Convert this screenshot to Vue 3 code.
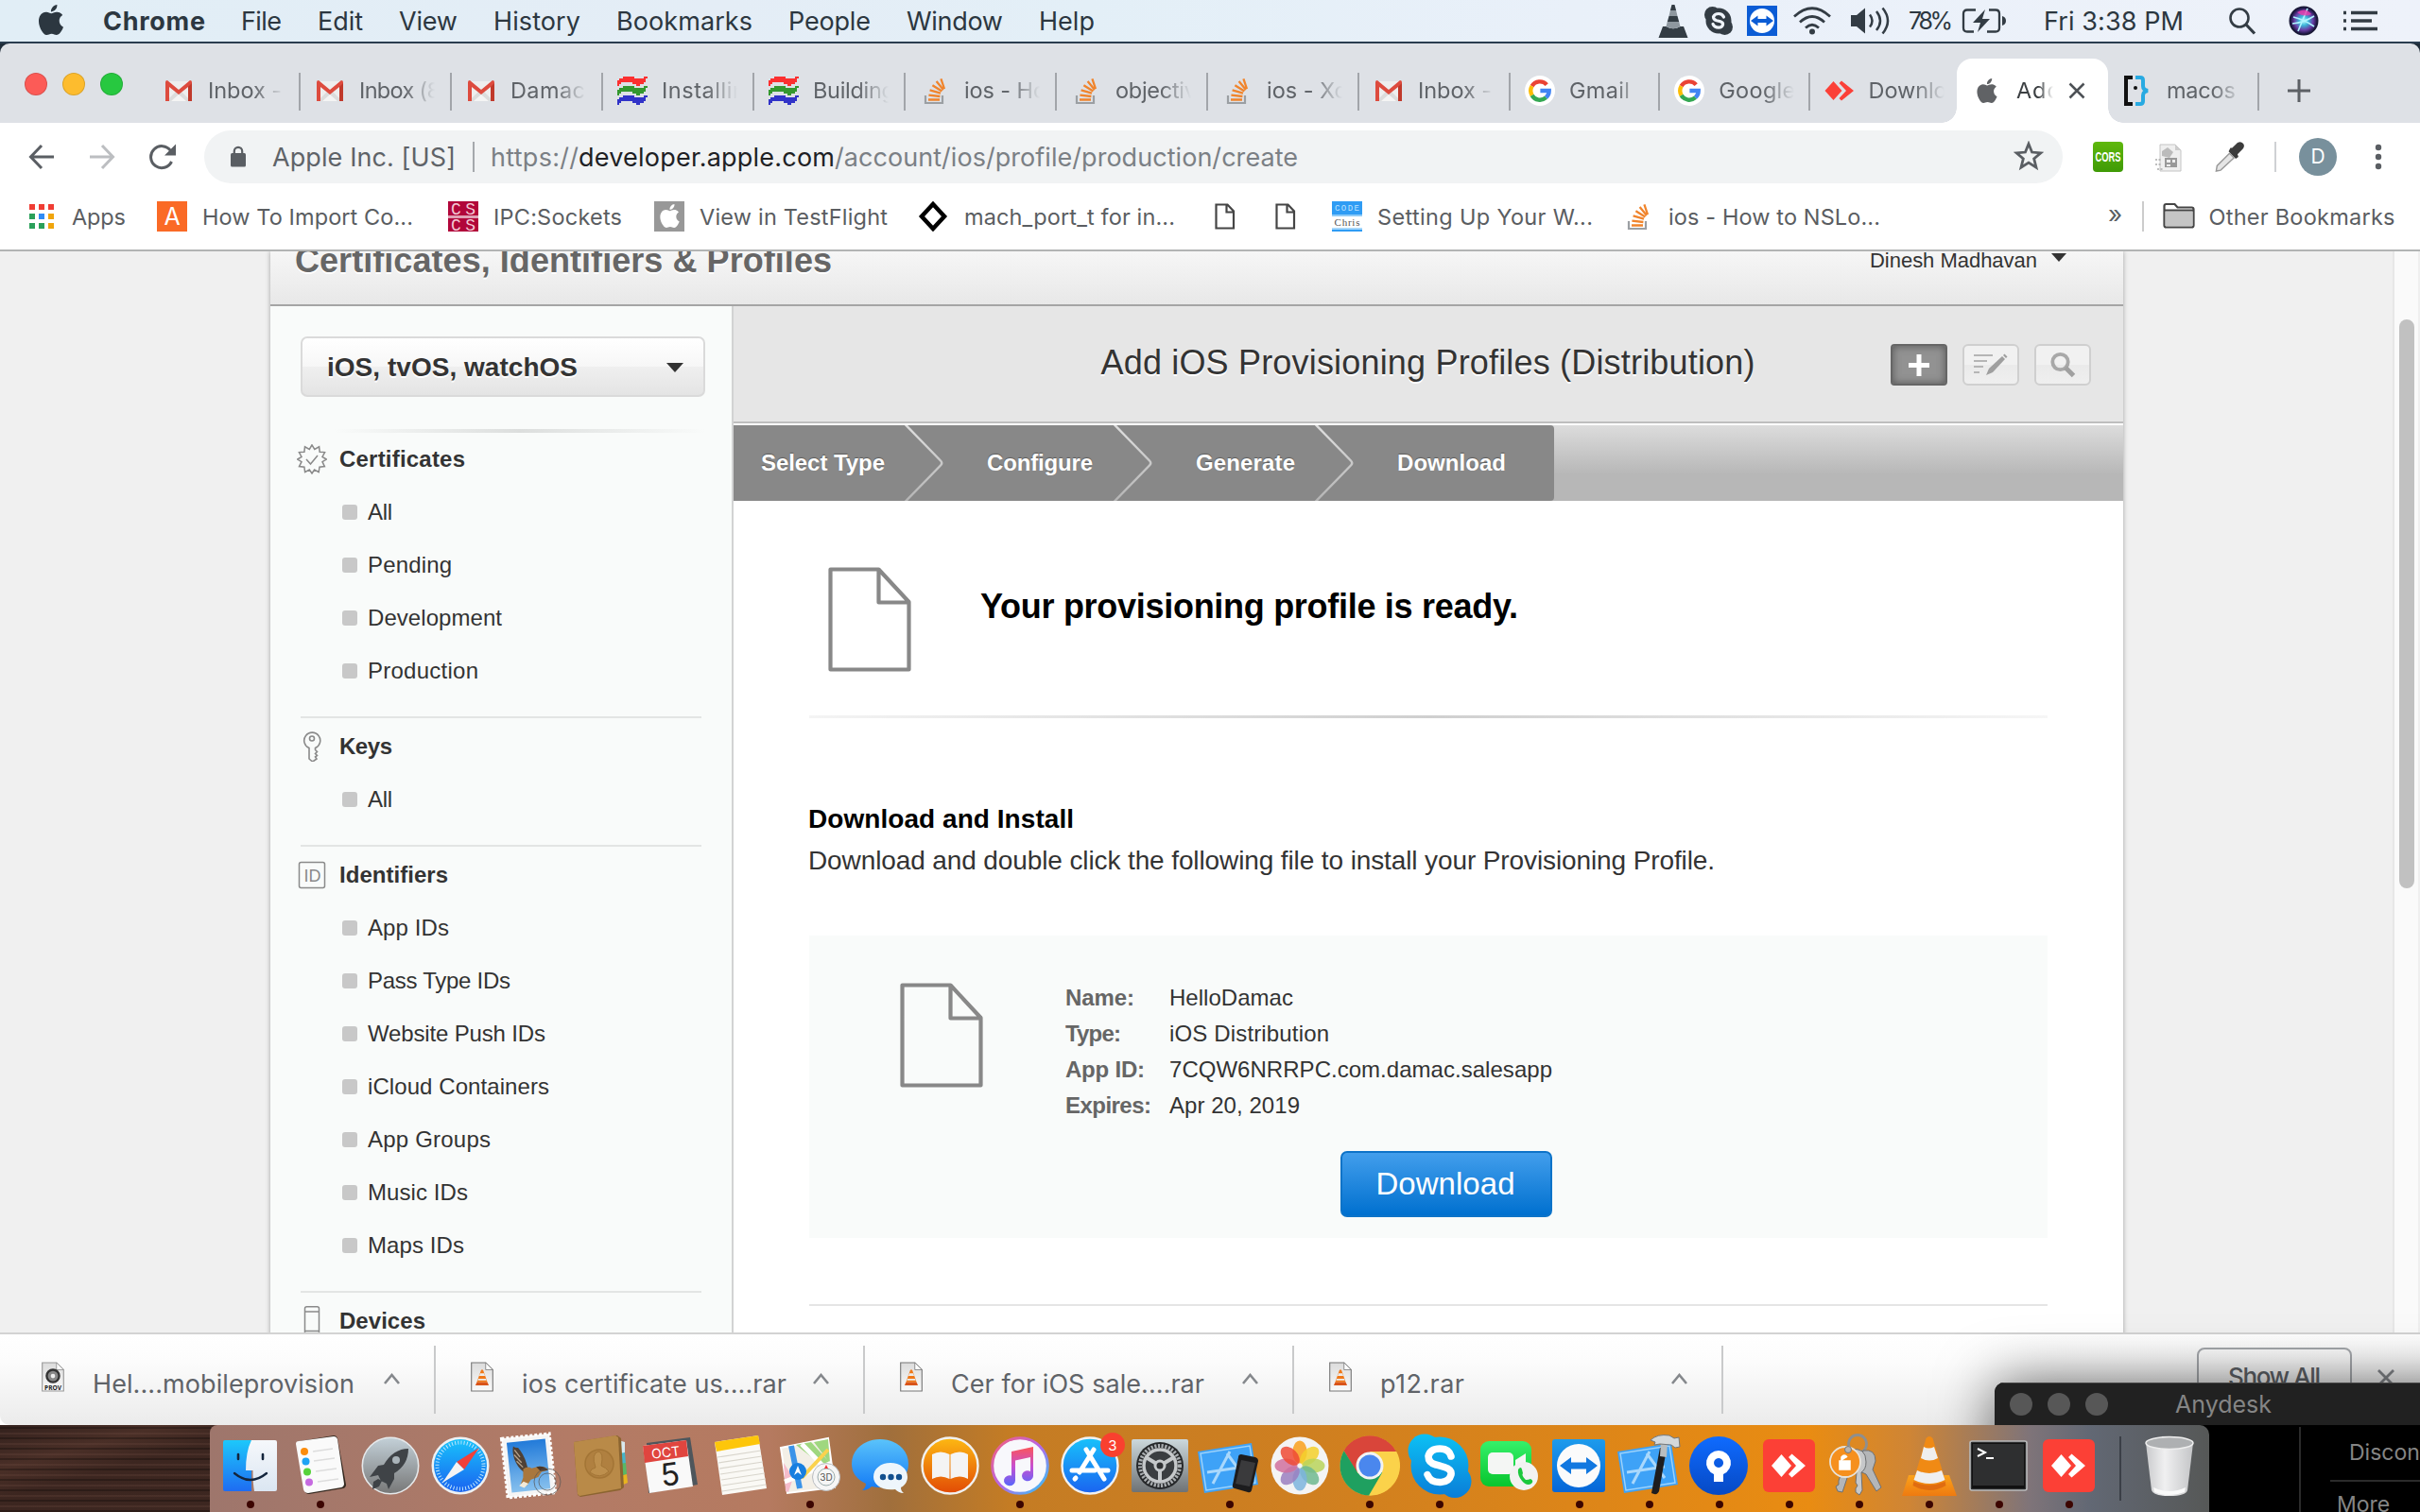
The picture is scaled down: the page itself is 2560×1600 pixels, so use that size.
<script setup>
// Spreads the letters of a label so that it fills the given width in pixels.
const vFit = {
  mounted(el, { value }) {
    const count = el.textContent.length
    if (!value || count < 2) return
    const spacing = (value - el.getBoundingClientRect().width) / (count - 1)
    el.style.letterSpacing = `${spacing}px`
    el.style.marginRight = `${-spacing}px`
  },
}

const menus = [
  ['File', 43], ['Edit', 48], ['View', 62], ['History', 92], ['Bookmarks', 144],
  ['People', 87], ['Window', 102], ['Help', 59],
]

const tabs = [
  { icon: 'gmail', title: 'Inbox -', w: 78 },
  { icon: 'gmail', title: 'Inbox (8', w: 86 },
  { icon: 'gmail', title: 'Damac', w: 79 },
  { icon: 'wave', title: 'Installin', w: 89 },
  { icon: 'wave', title: 'Building', w: 87 },
  { icon: 'so', title: 'ios - Ho', w: 87 },
  { icon: 'so', title: 'objectiv', w: 86 },
  { icon: 'so', title: 'ios - Xc', w: 85 },
  { icon: 'gmail', title: 'Inbox -', w: 78 },
  { icon: 'google', title: 'Gmail', w: 64 },
  { icon: 'google', title: 'Google', w: 81 },
  { icon: 'anydesk', title: 'Downlo', w: 83 },
]

// Small lettering that belongs to an icon, in the icon's own coordinates.
const sans = 'Inter, sans-serif'
const mono = 'Liberation Mono, monospace'
const marks = {
  'letter-a': [{ t: 'A', x: 16, y: 25, s: 25, c: '#fff', f: sans }],
  cscs: [
    { t: 'CS', x: 16, y: 14, s: 18, c: '#f3c8d4', f: mono, l: 26 },
    { t: 'CS', x: 16, y: 30.5, s: 18, c: '#f3c8d4', f: mono, l: 26 },
  ],
  codechris: [
    { t: 'CODE', x: 16, y: 10, s: 9, c: '#bfe2ff', f: mono, l: 26 },
    { t: 'Chris', x: 16, y: 26, s: 11, c: '#555', f: 'Liberation Serif, serif', l: 27 },
  ],
  idcard: [{ t: 'ID', x: 16.5, y: 22.5, s: 18, c: '#8a8a8a', f: 'Liberation Sans, sans-serif' }],
  prov: [{ t: 'PROV', x: 13, y: 31.5, s: 8, c: '#222', f: 'Noto Sans, sans-serif', l: 19, b: 700 }],
  calendar: [
    { t: 'OCT', x: 32, y: 34, s: 14, c: '#fff', f: sans, r: 'rotate(-7 32 28)' },
    { t: '5', x: 37, y: 64, s: 33, c: '#222', f: sans, r: 'rotate(-7 36 55)' },
  ],
  maps: [{ t: '3D', x: 54, y: 59, s: 10, c: '#555', f: sans }],
  appstore: [{ t: '3', x: 61, y: 26.5, s: 15, c: '#fff', f: sans }],
}

const bookmarks = [
  { icon: 'apps', title: 'Apps', w: 57, gap: 0, iw: 26, tg: 19 },
  { icon: 'letter-a', title: 'How To Import Co...', w: 223, gap: 33, iw: 32, tg: 16 },
  { icon: 'cscs', title: 'IPC:Sockets', w: 136, gap: 37, iw: 32, tg: 16 },
  { icon: 'apple-box', title: 'View in TestFlight', w: 199, gap: 34, iw: 32, tg: 16 },
  { icon: 'diamond', title: 'mach_port_t for in...', w: 223, gap: 32, iw: 32, tg: 17 },
  { icon: 'file', title: '', gap: 37, iw: 32, tg: 0 },
  { icon: 'file', title: '', gap: 32, iw: 32, tg: 0 },
  { icon: 'codechris', title: 'Setting Up Your W...', w: 228, gap: 33, iw: 32, tg: 16 },
  { icon: 'so', title: 'ios - How to NSLo...', w: 224, gap: 32, iw: 32, tg: 16 },
]

const sections = [
  { icon: 'seal', title: 'Certificates', w: 133, items: [['All', 26], ['Pending', 89], ['Development', 142], ['Production', 117]] },
  { icon: 'key', title: 'Keys', w: 56, items: [['All', 26]] },
  {
    icon: 'idcard', title: 'Identifiers', w: 115,
    items: [['App IDs', 86], ['Pass Type IDs', 151], ['Website Push IDs', 188], ['iCloud Containers', 192], ['App Groups', 130], ['Music IDs', 106], ['Maps IDs', 102]],
  },
  { icon: 'device', title: 'Devices', w: 91, items: [] },
]

const steps = [
  { title: 'Select Type', w: 131, pad: 29, box: 181 },
  { title: 'Configure', w: 112, pad: 87, box: 221 },
  { title: 'Generate', w: 105, pad: 87, box: 213 },
  { title: 'Download', w: 115, pad: 87, box: 253 },
]

const details = [
  ['Name:', 73, 'HelloDamac', 131],
  ['Type:', 59, 'iOS Distribution', 169],
  ['App ID:', 84, '7CQW6NRRPC.com.damac.salesapp', 405],
  ['Expires:', 91, 'Apr 20, 2019', 138],
]

const downloads = [
  { icon: 'prov', title: 'Hel....mobileprovision', w: 277 },
  { icon: 'rar', title: 'ios certificate us....rar', w: 280 },
  { icon: 'rar', title: 'Cer for iOS sale....rar', w: 268 },
  { icon: 'rar', title: 'p12.rar', w: 89 },
]

const dock = [
  ['finder', 1], ['reminders', 1], ['launchpad', 0], ['safari', 0], ['mail', 0], ['contacts', 0],
  ['calendar', 0], ['notes', 0], ['maps', 1], ['messages', 0], ['ibooks', 0], ['itunes', 1],
  ['appstore', 0], ['prefs', 0], ['simulator', 1], ['photos', 0], ['chrome', 1], ['skype', 1],
  ['facetime', 0], ['teamviewer', 1], ['xcode', 1], ['sourcetree', 1], ['anydesk-app', 1],
  ['keychain', 1], ['vlc', 1], ['terminal', 1], ['anydesk-app', 1],
]
const petals = ['#f9a01b', '#f3d02c', '#b9d45a', '#6fb98f', '#7db4dd', '#9a7fc0', '#d0709e', '#ef4a35']
</script>

<template>
  <div class="screen">
    <svg class="sprites" width="0" height="0">
      <defs>
        <linearGradient id="g-finder" x1="0" y1="0" x2="0" y2="1"><stop offset="0" stop-color="#1dc8fb" /><stop offset="1" stop-color="#1e6cf2" /></linearGradient>
        <linearGradient id="g-finder2" x1="0" y1="0" x2="0" y2="1"><stop offset="0" stop-color="#f6f8fb" /><stop offset="1" stop-color="#dbe6f2" /></linearGradient>
        <linearGradient id="g-launch" x1="0" y1="0" x2="0" y2="1"><stop offset="0" stop-color="#c3d0d8" /><stop offset="1" stop-color="#777" /></linearGradient>
        <linearGradient id="g-blue" x1="0" y1="0" x2="0" y2="1"><stop offset="0" stop-color="#18c2fb" /><stop offset="1" stop-color="#1a63f0" /></linearGradient>
        <linearGradient id="g-msg" x1="0" y1="0" x2="0" y2="1"><stop offset="0" stop-color="#5ac3fb" /><stop offset="1" stop-color="#1279f5" /></linearGradient>
        <linearGradient id="g-books" x1="0" y1="0" x2="0" y2="1"><stop offset="0" stop-color="#fdb913" /><stop offset="1" stop-color="#e24a05" /></linearGradient>
        <linearGradient id="g-music" x1="0.3" y1="0" x2="0.3" y2="1"><stop offset="0" stop-color="#fb5558" /><stop offset="0.5" stop-color="#c84fd0" /><stop offset="1" stop-color="#5a66fb" /></linearGradient>
        <linearGradient id="g-ring" x1="0" y1="0" x2="1" y2="1"><stop offset="0" stop-color="#f85e74" /><stop offset="0.5" stop-color="#b666e8" /><stop offset="1" stop-color="#2ccbf5" /></linearGradient>
        <linearGradient id="g-prefs" x1="0" y1="0" x2="0" y2="1"><stop offset="0" stop-color="#ccd8dc" /><stop offset="1" stop-color="#6e7275" /></linearGradient>
        <linearGradient id="g-green" x1="0" y1="0" x2="0" y2="1"><stop offset="0" stop-color="#35f06a" /><stop offset="1" stop-color="#08c52e" /></linearGradient>
        <linearGradient id="g-skype" gradientUnits="userSpaceOnUse" x1="0" y1="10" x2="0" y2="76"><stop offset="0" stop-color="#0cc0f4" /><stop offset="1" stop-color="#0a7ed8" /></linearGradient>
        <linearGradient id="g-tv" x1="0" y1="0" x2="0" y2="1"><stop offset="0" stop-color="#1d9bec" /><stop offset="1" stop-color="#0566d8" /></linearGradient>
        <linearGradient id="g-st" x1="0" y1="0" x2="0" y2="1"><stop offset="0" stop-color="#0f6bff" /><stop offset="1" stop-color="#0649c4" /></linearGradient>
        <linearGradient id="g-orange" x1="0" y1="0" x2="0" y2="1"><stop offset="0" stop-color="#fba31a" /><stop offset="1" stop-color="#ee7a10" /></linearGradient>
        <linearGradient id="g-trash" x1="0" y1="0" x2="1" y2="0"><stop offset="0" stop-color="#c9cacc" /><stop offset="0.4" stop-color="#f0f0f1" /><stop offset="1" stop-color="#c4c5c7" /></linearGradient>
        <linearGradient id="g-chev" x1="0" y1="0" x2="0" y2="1"><stop offset="0" stop-color="#dedede" /><stop offset="1" stop-color="#b4b4b4" /></linearGradient>
        <linearGradient id="g-sky" x1="0" y1="0" x2="0" y2="1"><stop offset="0" stop-color="#1d77d8" /><stop offset="1" stop-color="#8cc4ef" /></linearGradient>
        <linearGradient id="g-doc" x1="0" y1="0" x2="0" y2="1"><stop offset="0" stop-color="#dcdcdc" /><stop offset="1" stop-color="#fafafa" /></linearGradient>
        <radialGradient id="g-siri"><stop offset="0" stop-color="#bff" /><stop offset="0.35" stop-color="#3bb5d8" /><stop offset="0.7" stop-color="#6a3fa8" /><stop offset="1" stop-color="#1a1640" /></radialGradient>
      </defs>

      <symbol id="apple" viewBox="0 0 24 24"><path d="M12.152 6.896c-.948 0-2.415-1.078-3.96-1.04-2.04.027-3.91 1.183-4.961 3.014-2.117 3.675-.546 9.103 1.519 12.09 1.013 1.454 2.208 3.09 3.792 3.039 1.52-.065 2.09-.987 3.935-.987 1.831 0 2.35.987 3.96.948 1.637-.026 2.676-1.48 3.676-2.948 1.156-1.688 1.636-3.325 1.662-3.415-.039-.013-3.182-1.221-3.22-4.857-.026-3.04 2.48-4.494 2.597-4.559-1.429-2.09-3.623-2.324-4.39-2.376-2-.156-3.675 1.09-4.61 1.09zM15.53 3.83c.843-1.012 1.4-2.427 1.245-3.83-1.207.052-2.662.805-3.532 1.818-.78.896-1.454 2.338-1.273 3.714 1.338.104 2.715-.688 3.559-1.701" fill="currentColor" /></symbol>

      <symbol id="gmail" viewBox="0 0 32 32">
        <path d="M3 6h26v21H3z" fill="#eee" /><path d="M3 27l13-13 13 13z" fill="#dcdcdc" /><path d="M8 27l8-7 8 7z" fill="#f4f4f4" />
        <path d="M2 7q0-2 2-2l12 10L28 5q2 0 2 2v20h-4V12L16 20 6 12v15H2z" fill="#dd4b3e" /><path d="M26 12l4-4v19h-4z" fill="#c0392b" />
      </symbol>
      <symbol id="wave" viewBox="0 0 32 32">
        <path d="M0 5H2V3H6V1H18V3H28V1H32V3H30V7H28V9H24V11H20V9H16V7H4V9H2V11H0z" fill="#fb3030" />
        <path d="M0 15H2V13H6V11H18V13H28V11H32V13H30V17H28V19H24V21H20V19H16V17H4V19H2V21H0z" fill="#34982f" />
        <path d="M0 25H2V23H6V21H18V23H28V21H32V23H30V27H28V29H24V31H20V29H16V27H4V29H2V31H0z" fill="#3133c8" />
      </symbol>
      <symbol id="so" viewBox="0 0 32 32">
        <path d="M6 21v8h18v-8" fill="none" stroke="#9b9fa3" stroke-width="2.2" />
        <path d="M9 25.5h12M9.4 20.6l12 1.4M10.6 15.4l11.4 3.2M13.4 10.2l10 6.2M17.6 6l7.4 9M22.4 3.4L26 14" stroke="#f0842c" stroke-width="2.3" fill="none" />
      </symbol>
      <symbol id="google" viewBox="0 0 32 32">
        <circle cx="16" cy="16" r="16" fill="#fff" />
        <g fill="none" stroke-width="4.4"><path d="M23.2 9.6A9.7 9.7 0 0 0 7.6 11.2" stroke="#ea4335" /><path d="M7.6 11.2a9.7 9.7 0 0 0 0 9.6" stroke="#fbbc05" /><path d="M7.6 20.8a9.7 9.7 0 0 0 14.9 2.4" stroke="#34a853" /><path d="M22.5 23.2a9.7 9.7 0 0 0 3.2-7.2H16.4" stroke="#4285f4" /></g>
      </symbol>
      <symbol id="anydesk" viewBox="0 0 32 32"><path d="M9.500 6l9 10-9 10L.5 16z" fill="#fb4038" /><path d="M15.500 8l2.500-2.500L31 16 18 26.500 15.500 24 23 16z" fill="#fb4038" /></symbol>
      <symbol id="macosdoc" viewBox="0 0 32 32">
        <path d="M11 2H4v28h7" fill="none" stroke="#111" stroke-width="4" /><circle cx="14" cy="13" r="2" fill="#111" />
        <path d="M14 2h5q3 0 3 3v6q0 4 5 5-5 1-5 5v6q0 3-3 3h-5" fill="none" stroke="#28aae2" stroke-width="4" />
      </symbol>

      <symbol id="apps" viewBox="0 0 26 26"><path d="M0 0h6v6H0zM10 0h6v6h-6zM20 0h6v6h-6z" fill="#f03d34" /><path d="M0 10h6v6H0zM0 20h6v6H0zM10 20h6v6h-6z" fill="#2aa05a" /><path d="M10 10h6v6h-6z" fill="#2f8bf5" /><path d="M20 10h6v6h-6zM20 20h6v6h-6z" fill="#f0a50c" /></symbol>
      <symbol id="letter-a" viewBox="0 0 32 32"><path d="M0 0h32v32H0z" fill="#fa6a26" /></symbol>
      <symbol id="cscs" viewBox="0 0 32 32"><path d="M0 0h32v32H0z" fill="#b1063a" /><path d="M0 15h32v3H0z" fill="#e0a0b4" /></symbol>
      <symbol id="apple-box" viewBox="0 0 32 32"><path d="M0 0h32v32H0z" fill="#989898" /><svg x="4" y="3" width="25" height="25" viewBox="0 0 24 24" color="#fff"><use href="#apple" /></svg></symbol>
      <symbol id="diamond" viewBox="0 0 32 32"><path d="M16 3l12 13-12 13L4 16z" fill="#fff" stroke="#000" stroke-width="4.500" /></symbol>
      <symbol id="file" viewBox="0 0 32 32"><path d="M6.500 3.500h12l6.500 7v18h-18.500zM17.500 3.500v8H25" fill="#fff" stroke="#454545" stroke-width="2.200" /></symbol>
      <symbol id="codechris" viewBox="0 0 32 32"><path d="M0 0h32v16H0z" fill="#2f9cf4" /><path d="M0 14h32v2H0z" fill="#8ecbf8" /><path d="M0 16h32v14H0z" fill="#fff" /><path d="M0 28h32v2H0z" fill="#a8d8fb" /><path d="M0 30h32v2H0z" fill="#2f9cf4" /></symbol>
      <symbol id="folder" viewBox="0 0 34 28"><path d="M1.500 24.500V4q0-2 2-2h9l3 3.500h15q2 0 2 2v17q0 2-2 2h-27q-2 0-2-2z" fill="#fff" stroke="#454545" stroke-width="2.200" /><path d="M2.600 9.500h29v15.500h-29z" fill="#c5c5c5" /><path d="M1.500 8.500h31" stroke="#454545" stroke-width="2" /></symbol>

      <symbol id="seal" viewBox="0 0 32 32"><g fill="none" stroke="#8a8a8a" stroke-width="1.500"><path d="M16 .8l2.800 4.600 4.800-2.600.6 5.400 5.400.4-2.600 4.800L31.200 16l-4.200 2.700 2.400 4.900-5.400.6-.8 5.400-4.600-2.600L16 31l-2.700-4-4.700 2.600-.7-5.400-5.400-.6 2.500-4.900L.8 16 5 13.400 2.400 8.600l5.500-.4.6-5.400 4.800 2.600z" /><path d="M10 16l4.500 5L22 12" /></g></symbol>
      <symbol id="key" viewBox="0 0 32 32"><g fill="none" stroke="#8a8a8a" stroke-width="1.600"><path d="M13 17.500a8.500 8.500 0 1 1 6.500 0v2l2 2-2 2 2 2-2 1.500 1.500 2-3.500 2.500h-1.500l-3-2.500z" /><circle cx="16" cy="7.500" r="2.500" /></g></symbol>
      <symbol id="idcard" viewBox="0 0 32 32"><rect x="2.500" y="2.500" width="27" height="27" rx="2" fill="none" stroke="#8a8a8a" stroke-width="1.500" /></symbol>
      <symbol id="device" viewBox="0 0 32 32"><g fill="none" stroke="#8a8a8a" stroke-width="1.500"><rect x="8.500" y=".8" width="15" height="32" rx="2" /><path d="M8.500 6h15M8.500 26.500h15" /></g></symbol>
      <symbol id="page" viewBox="0 0 88 112"><path d="M2.500 2.500h51l32 34.500v71.500h-83zM53.500 2.500v35h32" fill="none" stroke="#888" stroke-width="4.200" stroke-linejoin="round" /></symbol>

      <symbol id="prov" viewBox="0 0 26 34"><path d="M1 1h16l8 8v24H1z" fill="url(#g-doc)" stroke="#999" stroke-width="1.200" /><path d="M17 1v8h8z" fill="#fff" stroke="#999" /><circle cx="13" cy="16" r="7" fill="#888" stroke="#333" stroke-width="2.500" /><circle cx="13" cy="16" r="2.500" fill="#eee" /></symbol>
      <symbol id="rar" viewBox="0 0 26 34"><path d="M1 1h16l8 8v24H1z" fill="url(#g-doc)" stroke="#777" stroke-width="1.200" /><path d="M17 1v8h8z" fill="#fff" stroke="#888" /><path d="M12 9h2l5 14H7z" fill="#f07818" /><path d="M10.800 13h4.400l1 3H9.800zM8.800 19h8.400l.8 2H8z" fill="#eee" /><path d="M7 23h12l1.500 3.500h-15z" fill="#d9541a" /></symbol>

      <!-- Dock artwork, each drawn in a 74 x 84 cell -->
      <symbol id="finder" viewBox="0 0 74 84"><path d="M8 18q0-2 2-2h28v54H10q-2 0-2-2z" fill="url(#g-finder)" /><path d="M38 16h25q2 0 2 2v50q0 2-2 2H41q-1.500-8-1.500-22H32q0-20 6-32z" fill="url(#g-finder2)" /><path d="M24 31v5M50 31v5" stroke="#14253c" stroke-width="2.600" stroke-linecap="round" /><path d="M20 51q17 14 34 0" fill="none" stroke="#14253c" stroke-width="2.300" stroke-linecap="round" /></symbol>
      <symbol id="reminders" viewBox="0 0 74 84"><path d="M12 20q0-3 3-3l36-6q3 0 4 3l9 49q0 3-3 4l-36 6q-4 0-5-4z" fill="#33281f" /><path d="M11 20q0-3 3-3l37-5q3 0 4 3l7 47q0 3-3 4l-35 6q-4 0-5-4z" fill="#fafafa" /><circle cx="20" cy="28" r="4" fill="#fb8c0c" /><circle cx="21.500" cy="38.500" r="4" fill="#1fa3f3" /><circle cx="23" cy="49.500" r="4" fill="#56d23a" /><circle cx="25" cy="60.500" r="4" fill="#c66ae0" /><path d="M29 28l21-3M30 38l22-3M32 49l22-3M34 60l22-3" stroke="#ddd" stroke-width="1.400" /></symbol>
      <symbol id="launchpad" viewBox="0 0 74 84"><circle cx="37" cy="43" r="29.700" fill="url(#g-launch)" stroke="#e6e9eb" stroke-width="1.600" /><path d="M56 25q-16 0-26 17l-6 1-9 12 9-2 3 6 6 3 2 6 6-11v-6q15-9 15-26z" fill="#3f4347" /><circle cx="43" cy="37" r="4" fill="#aab4ba" /><path d="M24 57l-5 3-1 8 7-3 3-6z" fill="#3f4347" /></symbol>
      <symbol id="safari" viewBox="0 0 74 84"><circle cx="37" cy="43" r="30.500" fill="#eef1f3" /><circle cx="37" cy="43" r="28" fill="url(#g-blue)" /><circle cx="37" cy="43" r="24.500" fill="none" stroke="#bfe6fb" stroke-width="4" stroke-dasharray="1 2.200" /><path d="M57 24L33 39l8 8z" fill="#f0403a" /><path d="M18 61l15-22 8 8z" fill="#f4f4f4" /></symbol>
      <symbol id="mail" viewBox="0 0 74 84">
        <g transform="rotate(-6 35 42)">
          <rect x="12" y="14" width="46" height="58" fill="url(#g-sky)" stroke="#f5f5f5" stroke-width="5" /><rect x="9.500" y="11.500" width="51" height="63" fill="none" stroke="#fff" stroke-width="3" stroke-dasharray="3 2" />
          <path d="M21 21q2 2 5 2 5 7 7 17l1 6-5 3q-6-6-8-14-2-8 0-14z" fill="#4f4034" /><path d="M22 25l5 8M21 30l7 9M23 37l6 7" stroke="#b9a48c" stroke-width="1.300" />
          <path d="M29 46q5-3 9 0l8-1q8 1 9 5l-7 1-4 5-8 2-5 6-6-3 3-6z" fill="#a9773d" /><path d="M43 45q8-1 12 5l-8 0z" fill="#4a3627" /><path d="M28 59l-5 4 5 3 5-4z" fill="#f2ead8" />
        </g>
        <g fill="none" stroke="#555" stroke-opacity=".7"><circle cx="55" cy="60" r="14" /><circle cx="55" cy="60" r="9" /></g>
      </symbol>
      <symbol id="contacts" viewBox="0 0 74 84"><path d="M56 16l7 2v12l-6 1z" fill="#d9e9ee" /><path d="M57 30l6-1 1 12-6 1z" fill="#45b5c8" /><path d="M57 41l7-1 1 12-7 2z" fill="#59b865" /><path d="M58 54l7-2 1 9-7 3z" fill="#e8b51f" /><path d="M9 18l46-7 4 3 3 52-4 3-42 7-3-2z" fill="#8b6430" /><path d="M9 18l44-7 3 2 3 54-44 8-2-2z" fill="#b98a48" /><circle cx="36" cy="41" r="15" fill="#b08040" stroke="#a37536" stroke-width="1.500" /><path d="M26 50q1-4 6-5-5-15 3-17 6 1 3 15 5 2 8 6-9 9-20 1z" fill="#bd8f4d" stroke="#a37536" /></symbol>
      <symbol id="calendar" viewBox="0 0 74 84"><path d="M12 19l46-6 8 50-52 9z" fill="#4e565c" /><path d="M8 22l46-6 7 49-46 7z" fill="#f9f9f9" /><path d="M8 22l46-6 2 17-46 7z" fill="#e0453f" /></symbol>
      <symbol id="notes" viewBox="0 0 74 84"><path d="M10 18l46-7 9 56-47 7z" fill="#faf9f5" /><path d="M10 18l46-7 2 9-46 8z" fill="#fdc60a" /><path d="M13 34l46-7M14 40l46-7M15 46l46-7M16 52l46-7M17 58l46-7M18 64l46-7M18 70l46-7" stroke="#d8d5cc" stroke-width="1.200" /></symbol>
      <symbol id="maps" viewBox="0 0 74 84"><path d="M6 24l50-10 7 52-50 6z" fill="#f3efe6" stroke="#fff" stroke-width="2" /><path d="M22 21l16-3 20 22-2-25-15 3 18 24 1 9z" fill="#9fd77f" /><path d="M9 40l10 16-5 15-3-1z" fill="#f5bccb" /><path d="M28 20l33 34M10 60l50-20" stroke="#fff" stroke-width="5" /><path d="M28 56l28-30" stroke="#fbd24d" stroke-width="4" /><path d="M17 22l9 45" stroke="#3a93e8" stroke-width="6" /><circle cx="24" cy="49" r="9" fill="#177fe0" /><path d="M24 43l4 10-4-3-4 3z" fill="#fff" /><circle cx="54" cy="55" r="14.500" fill="#f6f6f6" stroke="#b9bcc0" /><circle cx="54" cy="55" r="9" fill="none" stroke="#9aa" /><path d="M54 42l2 4h-4z" fill="#e33" /></symbol>
      <symbol id="messages" viewBox="0 0 74 84"><path d="M37 15c17 0 30 11 30 26S54 66 37 66q-5 0-9-1-4 4-10 4 4-3 4-7Q7 55 7 41c0-15 13-26 30-26z" fill="url(#g-msg)" /><path d="M48 40c10 0 18 6 18 15 0 5-3 9-7 11 0 3 1 4 3 6-4 0-7-2-9-4-14 2-23-5-23-13 0-9 8-15 18-15z" fill="#eef6fc" /><circle cx="40" cy="55" r="3.200" fill="#12508f" /><circle cx="48.500" cy="55" r="3.200" fill="#12508f" /><circle cx="57" cy="55" r="3.200" fill="#12508f" /></symbol>
      <symbol id="ibooks" viewBox="0 0 74 84"><circle cx="37" cy="43" r="29.500" fill="url(#g-books)" stroke="#f1f1f1" stroke-width="2.400" /><path d="M18 31q9-5 18.500 0v26Q27 52 18 57zM56 31q-9-5-18.500 0v26Q47 52 56 57z" fill="#f4f4f4" /></symbol>
      <symbol id="itunes" viewBox="0 0 74 84"><circle cx="37" cy="43" r="29.300" fill="#f8f8fc" stroke="url(#g-ring)" stroke-width="3" /><path d="M28 28l23-5v31a6 5.500 0 1 1-3-5V34l-16 3.500v21a6 5.500 0 1 1-4-5z" fill="url(#g-music)" /></symbol>
      <symbol id="appstore" viewBox="0 0 74 84"><circle cx="37" cy="43" r="29.500" fill="url(#g-blue)" stroke="#f1f1f1" stroke-width="2.400" /><g stroke="#fff" stroke-width="5" stroke-linecap="round"><path d="M33 26l19 31M41 26L26 50M18 48h24M49 48h7M22 56l-1 1" /></g><circle cx="61" cy="21" r="13" fill="#f9402f" /></symbol>
      <symbol id="prefs" viewBox="0 0 74 84"><rect x="7" y="15" width="60" height="56" rx="2" fill="url(#g-prefs)" /><circle cx="37" cy="43" r="25" fill="#26282a" /><circle cx="37" cy="43" r="21" fill="none" stroke="#a9adb0" stroke-width="4" stroke-dasharray="2.200 1.500" /><circle cx="37" cy="43" r="17" fill="#3a3d40" stroke="#c5c8ca" stroke-width="3.500" /><path d="M37 43V60M37 43L22 34M37 43l15-9" stroke="#c5c8ca" stroke-width="4" /><circle cx="37" cy="43" r="5" fill="#303234" stroke="#c5c8ca" stroke-width="3" /></symbol>
      <symbol id="bprint" viewBox="0 0 74 84"><path d="M3 28l57-9 7 44-57 9z" fill="#3ea2f7" /><path d="M6 30l52-8 6 39-52 8z" fill="none" stroke="#9cd2fb" stroke-width="1.500" /><g stroke="#a9d8fc" stroke-width="3" fill="none"><path d="M37 28L19 62M34 30l19 26M13 50l40-6" /></g></symbol>
      <symbol id="simulator" viewBox="0 0 74 84"><use href="#bprint" width="74" height="84" /><path d="M46 34q0-3 3-3l15 3q3 1 3 4l-7 31q-1 3-4 2l-14-4q-3-1-2-4z" fill="#1c1c1e" /><path d="M49 37l15 3-6 25-15-3z" fill="#3a3a3c" /></symbol>
      <symbol id="photos" viewBox="0 0 74 84"><circle cx="37" cy="43" r="30.500" fill="#f4f4f4" /><g><ellipse v-for="(c, i) in petals" :key="c" cx="37" cy="28.500" rx="7.600" ry="12" :fill="c" fill-opacity=".85" :transform="`rotate(${i * 45} 37 43)`" /></g></symbol>
      <symbol id="chrome" viewBox="0 0 74 84"><circle cx="37" cy="43" r="31.500" fill="#fbd24a" /><path d="M37 43L9.700 27.300A31.500 31.500 0 0 1 64.300 27.300z" fill="#d9453a" /><path d="M37 28h28.500l-1.200-.7A31.500 31.500 0 0 0 9.700 27.300L23 50z" fill="#d9453a" /><path d="M9.700 27.300A31.500 31.500 0 0 0 37 74.500L50.500 50l-26 1z" fill="#1fa060" /><path d="M36 74.500A31.500 31.500 0 0 0 65.200 28H37l13.500 22z" fill="#fbd24a" /><circle cx="37" cy="43" r="14.500" fill="#f3f3f3" /><circle cx="37" cy="43" r="11.500" fill="#4a87ee" /></symbol>
      <symbol id="skype" viewBox="0 0 74 84"><g fill="url(#g-skype)"><circle cx="37" cy="43" r="30.500" /><circle cx="21" cy="27" r="17.500" /><circle cx="53" cy="59.500" r="17.500" /></g><path d="M49 33q-2-8-12-8t-12 8q0 7 8 9l9 2.500q8 2.500 7 8-2 8-12 8t-13-8" fill="none" stroke="#fff" stroke-width="7.500" stroke-linecap="round" /></symbol>
      <symbol id="facetime" viewBox="0 0 74 84"><rect x="6" y="17" width="54" height="48" rx="9" fill="url(#g-green)" /><rect x="14" y="29" width="27" height="23" rx="5" fill="#f4f6f4" /><path d="M43 37l11-7v21l-11-6z" fill="#f4f6f4" /><circle cx="52" cy="54" r="15" fill="#f2f2f2" /><path d="M46 47q3-4 4 0l1 4q-2 2 3 7 3 0 5-1 4 2 1 5-5 3-10-3t-4-12z" fill="#1bc83c" /></symbol>
      <symbol id="teamviewer" viewBox="0 0 74 84"><rect x="8" y="15" width="56" height="56" rx="3" fill="url(#g-tv)" /><circle cx="36" cy="43" r="23" fill="#fbfbfb" /><path d="M16 43l12-9v5.500h16V34l12 9-12 9v-5.500H28V52z" fill="#1278e0" /></symbol>
      <symbol id="xcode" viewBox="0 0 74 84"><use href="#bprint" width="74" height="84" /><path d="M48 24l7 1-8 45q-2 5-8 2z" fill="#1d1d1f" /><path d="M49 17l7 1-1 16-7-1z" fill="#b9bdbf" /><path d="M38 16q7-7 20-5l5 3 5-1 1 10-5 1-4-3-12-1-6 1 1-3z" fill="#d4d8da" stroke="#72777b" /></symbol>
      <symbol id="sourcetree" viewBox="0 0 74 84"><circle cx="36" cy="43" r="31" fill="url(#g-st)" /><path d="M36 27a13 13 0 0 1 5 25v8H31v-8a13 13 0 0 1 5-25zm0 8a5 5 0 1 0 .1 0z" fill="#fff" fill-rule="evenodd" /></symbol>
      <symbol id="anydesk-app" viewBox="0 0 74 84"><rect x="9" y="15" width="55" height="56" rx="6" fill="#fc4036" /><path d="M28.500 31l10.500 12-10.500 12L18 43z" fill="#fff" /><path d="M36 34l3.500-3.500L54 43 39.500 55.500 36 52l8-9z" fill="#fff" /></symbol>
      <symbol id="keychain" viewBox="0 0 74 84"><circle cx="35" cy="20" r="9.500" fill="none" stroke="#8e8f8f" stroke-width="2.800" /><g fill="#b4b6b8" stroke="#6e7072" stroke-width="1"><path d="M20 44l7 3-8 24-5-1-2-5 3-2 0-4z" /><path d="M41 27q13-2 13 11l-3 9 9 19-5 4-11-18-9-4z" /><path d="M28 26q16-3 16 13 0 8-5 11l1 19-3 5-4-3v-4l2-3-2-3 1-11-9-3z" fill="#c6c8ca" /></g><circle cx="22" cy="39" r="16" fill="#f6901e" stroke="#e8e2d8" stroke-width="1.800" /><circle cx="25" cy="26" r="3.500" fill="#b5b5b5" stroke="#777" /><path d="M16 38h11v9H16zM18 38v-4q3-4 6 0" fill="#fff" stroke="#fff" stroke-width="1.500" /></symbol>
      <symbol id="vlc" viewBox="0 0 74 84"><path d="M15 53h43l8 22H8z" fill="url(#g-orange)" /><path d="M33.500 14q3.500-4 7 0l14 47q-17 15-35 0z" fill="#f08a14" /><path d="M31 23q5 3 11 0l4 12q-9 5-18 0zM24 48q13 6 26 0l3.500 10q-16 8-33 0z" fill="#efefef" /><path d="M20.500 60q16 7 33 0l1 4q-17 10-35 0z" fill="#e06c10" /></symbol>
      <symbol id="terminal" viewBox="0 0 74 84"><rect x="6" y="17" width="60" height="52" rx="2" fill="#2c2d2e" stroke="#b9bbbc" stroke-width="1.600" /><rect x="8" y="19" width="56" height="48" fill="#111" /><rect x="9" y="20" width="54" height="44" fill="#2e2f30" /><path d="M14 25l8 4-8 4" fill="none" stroke="#fff" stroke-width="2" /><path d="M23 35h8" stroke="#fff" stroke-width="2" /></symbol>
      <symbol id="trash" viewBox="0 0 74 84"><path d="M12 19l6 50q2 6 19 6t19-6l6-50z" fill="url(#g-trash)" /><ellipse cx="37" cy="19" rx="25" ry="6.500" fill="#aeb0b2" stroke="#eee" stroke-width="1.600" /><path d="M20 66q17 8 34 0l-1 5q-16 6-32 0z" fill="#fafafa" /></symbol>
    </svg>

    <header class="menubar">
      <svg class="mb-apple" viewBox="0 0 24 24"><use href="#apple" /></svg>
      <nav class="menus">
        <b v-fit="108" class="lbl">Chrome</b>
        <span v-for="m in menus" :key="m[0]" v-fit="m[1]" class="lbl">{{ m[0] }}</span>
      </nav>
      <div class="status">
        <svg viewBox="0 0 32 36"><path d="M14.500 1h3l1.600 6h-6.200zM11.500 13h9l1.800 6.500H9.700zM5 24h3.500q7.500 4.500 15 0H27l4.500 12H.5z" fill="#333c44" /><path d="M12.900 7h6.200l1.400 6h-9zM9.700 19.500h12.600l1.200 4.500q-7.500 4.500-15 0z" fill="#8e979f" /></svg>
        <svg viewBox="0 0 32 32"><circle cx="16" cy="16" r="13.500" fill="#333c44" /><circle cx="9.500" cy="9.500" r="8.500" fill="#333c44" /><circle cx="22.500" cy="22.500" r="8.500" fill="#333c44" /><path d="M21.500 12q-1.500-3.500-5.500-3.500t-5.500 3.200q0 3 3.500 4l4 1q3 1 2.500 3.500-1 3-4.500 3-4.500 0-6-3.800" fill="none" stroke="#eef3fa" stroke-width="3.200" stroke-linecap="round" /></svg>
        <svg viewBox="0 0 32 32"><path d="M0 0h32v32H0z" fill="#0b5cd5" /><circle cx="16" cy="16" r="13" fill="#fff" /><path d="M4 16l7.500-5.500v3.500h9v-3.500L28 16l-7.500 5.500V18h-9v3.500z" fill="#0b5cd5" /></svg>
        <svg viewBox="0 0 42 32"><g fill="none" stroke="#333c44" stroke-width="2.700"><path d="M2 11.500Q21-6 40 11.500M8 17.500q13-12 26 0M14 23.500q7-6.500 14 0" /></g><circle cx="21" cy="27.500" r="3" fill="#333c44" /></svg>
        <svg viewBox="0 0 42 32"><path d="M1 10h6l9-7.500v27L7 22H1z" fill="#333c44" /><g fill="none" stroke="#333c44" stroke-width="2.500"><path d="M21 9.500q5 6.500 0 13M28 6q8 10 0 20M34.500 2.500q11 13.500 0 27" /></g></svg>
        <span v-fit="47" class="lbl pct">78%</span>
        <svg viewBox="0 0 48 28"><g fill="none" stroke="#333c44" stroke-width="2.300"><path d="M15 2.500H6Q2 2.500 2 6.500v15q0 4 4 4h7M29 2.500h7q4 0 4 4v15q0 4-4 4h-9" /></g><path d="M43 9q4 1 4 5t-4 5zM25 2L12 16h8l-3 10 13-14h-8z" fill="#333c44" /></svg>
        <span v-fit="148" class="lbl">Fri 3:38 PM</span>
        <svg viewBox="0 0 30 30"><circle cx="12" cy="12" r="9.500" fill="none" stroke="#333c44" stroke-width="2.600" /><path d="M19 19l9 9.500" stroke="#333c44" stroke-width="3.200" /></svg>
        <svg viewBox="0 0 32 32"><circle cx="16" cy="16" r="15.500" fill="#191836" /><circle cx="16" cy="16" r="14" fill="url(#g-siri)" /><path d="M5 12q12 3 22 10M10 27q5-12 10-24M4 19q12-1 23-8" stroke="#aef4ff" stroke-width="1.700" fill="none" /><path d="M9 7q9-6 15 2-8 4-15-2z" fill="#ec3fae" fill-opacity=".8" /></svg>
        <svg viewBox="0 0 38 24"><path d="M1 3.500h3M9 3.500h28M1 12h3M9 12h22M1 20.500h3M9 20.500h28" stroke="#333c44" stroke-width="3.600" /></svg>
      </div>
    </header>

    <section class="browser">
      <div class="tabstrip">
        <div class="lights"><i class="r"></i><i class="y"></i><i class="g"></i></div>
        <div v-for="(t, i) in tabs" :key="i" class="tab" :class="{ last: i === 11, narrow: i > 8 }">
          <svg class="ic32"><use :href="'#' + t.icon" /></svg>
          <span class="ttl"><span v-fit="t.w" class="lbl">{{ t.title }}</span></span>
        </div>
        <div class="tab active">
          <svg class="ic32 grey"><use href="#apple" x="3" y="3" width="26" height="26" /></svg>
          <span class="ttl"><span v-fit="47" class="lbl">Add</span></span>
          <svg class="close" viewBox="0 0 18 18"><path d="M1.500 1.500l15 15M16.500 1.500l-15 15" stroke="#4d5156" stroke-width="2.500" /></svg>
        </div>
        <div class="tab">
          <svg class="ic32"><use href="#macosdoc" /></svg>
          <span class="ttl"><span v-fit="73" class="lbl">macos</span></span>
        </div>
        <svg class="plus" viewBox="0 0 26 26"><path d="M13 1v24M1 13h24" stroke="#5c6065" stroke-width="3" /></svg>
      </div>

      <div class="toolbar">
        <svg class="nav" viewBox="0 0 28 28"><path d="M27 14H3M14 2L2.500 14 14 26" fill="none" stroke="#5a5e63" stroke-width="3" /></svg>
        <svg class="nav" viewBox="0 0 28 28"><path d="M1 14h24M14 2l11.500 12L14 26" fill="none" stroke="#bcbec1" stroke-width="3" /></svg>
        <svg class="nav" viewBox="0 0 28 28"><path d="M23.500 19A11.500 11.500 0 1 1 22.500 7.500" fill="none" stroke="#5a5e63" stroke-width="3" /><path d="M28 .5v12H16z" fill="#5a5e63" /></svg>
        <div class="omnibox">
          <svg class="lock" viewBox="0 0 18 22"><path d="M1 9q0-1.500 1.500-1.500h13Q17 7.500 17 9v11.500q0 1.500-1.500 1.500h-13Q1 22 1 20.500z" fill="#5a5e63" /><path d="M4.800 8V5.500a4.200 4.200 0 0 1 8.400 0V8" fill="none" stroke="#5a5e63" stroke-width="2.200" /></svg>
          <span v-fit="194" class="lbl org">Apple Inc. [US]</span>
          <span class="vr"></span>
          <span v-fit="93" class="lbl u2">https://</span><span v-fit="271" class="lbl u1">developer.apple.com</span><span v-fit="490" class="lbl u2 rest">/account/ios/profile/production/create</span>
          <svg class="star" viewBox="0 0 30 30"><path d="M15 3l3.300 8.300 8.700.7-6.700 5.700 2.200 8.800L15 21.700l-7.500 4.800 2.200-8.800L3 12l8.700-.7z" fill="none" stroke="#5a5e63" stroke-width="2.600" /></svg>
        </div>
        <svg class="cors" viewBox="0 0 32 32"><text x="16" y="21" text-anchor="middle" textLength="27" lengthAdjust="spacingAndGlyphs" font-size="14" font-weight="700" fill="#fff" font-family="Liberation Sans, sans-serif">CORS</text></svg>
        <svg class="ext" viewBox="0 0 32 32"><path d="M6 3h16l6 6v22H6z" fill="#efefef" stroke="#c4c4c4" /><path d="M22 3v6h6z" fill="#ccc" /><path d="M8 10l6-4 6 5-4 6-8-2z" fill="#bbb" /><path d="M11 17h13v10H11z" fill="#999" /><path d="M13 19h4v3h-4zM19 19h3v3h-3zM13 24h4v2h-4z" fill="#eee" /><path d="M1 19h7M1 24h7M3 29h7" stroke="#aaa" stroke-width="1.500" stroke-dasharray="2 1.500" /></svg>
        <svg class="ext pipette" viewBox="0 0 34 34"><path d="M20 7l6-6q5-2 7 2 1 3-1 5l-6 6 1 3-3 2-8-8 2-4z" fill="#3c3c3c" /><path d="M17 13l5 5L7 32l-5 1 1-6z" fill="#e5e5e5" stroke="#999" stroke-width="1.500" /></svg>
        <span class="vr light"></span>
        <div class="avatar">D</div>
        <svg class="dots" viewBox="0 0 8 28"><circle cx="4" cy="4" r="3.200" fill="#5a5e63" /><circle cx="4" cy="14" r="3.200" fill="#5a5e63" /><circle cx="4" cy="24" r="3.200" fill="#5a5e63" /></svg>
      </div>

      <div class="bookmarks">
        <div v-for="(b, i) in bookmarks" :key="i" class="bm" :style="{ marginLeft: b.gap + 'px', gap: b.tg + 'px' }">
          <svg :width="b.iw" :height="b.iw"><use :href="'#' + b.icon" /><text v-for="m in marks[b.icon]" :key="m.y" :x="m.x" :y="m.y" :font-size="m.s" :fill="m.c" :font-family="m.f" :textLength="m.l" text-anchor="middle">{{ m.t }}</text></svg>
          <span v-if="b.title" v-fit="b.w" class="lbl">{{ b.title }}</span>
        </div>
        <span class="more">»</span>
        <span class="vr thin"></span>
        <svg class="folder" viewBox="0 0 34 28"><use href="#folder" /></svg>
        <span v-fit="197" class="lbl">Other Bookmarks</span>
      </div>
    </section>

    <main class="viewport">
      <div class="site">
        <div class="masthead">
          <div class="mast-row">
            <span v-fit="568" class="lbl mast-title">Certificates, Identifiers &amp; Profiles</span>
            <span v-fit="177" class="lbl user">Dinesh Madhavan</span>
            <i class="caret small"></i>
          </div>
        </div>
        <div class="cols">
          <aside class="side">
            <div class="select"><span v-fit="265" class="lbl">iOS, tvOS, watchOS</span><i class="caret"></i></div>
            <div class="fade-rule"></div>
            <div v-for="s in sections" :key="s.title" class="sec">
              <div class="sec-head">
                <svg class="ic32"><use :href="'#' + s.icon" /><text v-for="m in marks[s.icon]" :key="m.y" :x="m.x" :y="m.y" :font-size="m.s" :fill="m.c" :font-family="m.f" font-weight="400" text-anchor="middle">{{ m.t }}</text></svg>
                <span v-fit="s.w" class="lbl">{{ s.title }}</span>
              </div>
              <div v-for="it in s.items" :key="it[0]" class="sec-item"><i></i><span v-fit="it[1]" class="lbl">{{ it[0] }}</span></div>
            </div>
          </aside>
          <section class="content">
            <div class="titlebar">
              <span v-fit="692" class="lbl pagetitle">Add iOS Provisioning Profiles (Distribution)</span>
              <div class="btns">
                <span class="tb on"><svg width="28" height="28" viewBox="0 0 28 28"><path d="M3 12h8.500V3h5v9H25v5h-8.500v9h-5v-9H3z" fill="#fff" /></svg></span>
                <span class="tb"><svg width="36" height="24" viewBox="0 0 36 24"><path d="M0 2h20M0 8h14M0 14h10M0 20h6" stroke="#b5b5b5" stroke-width="2.200" /><path d="M13 23l3-7L30 3l3 3-13 14z" fill="#9f9f9f" /><path d="M31 2l1.500-1.500 3 3L34 5z" fill="#9f9f9f" /></svg></span>
                <span class="tb"><svg width="28" height="28" viewBox="0 0 28 28"><circle cx="11.500" cy="11" r="8.200" fill="none" stroke="#a8a8a8" stroke-width="3.800" /><path d="M17 17l8.500 8.500" stroke="#a0a0a0" stroke-width="5" /></svg></span>
              </div>
            </div>
            <div class="steps">
              <div v-for="(s, i) in steps" :key="s.title" class="step" :class="{ end: i === 3 }" :style="{ width: s.box + 'px', paddingLeft: s.pad + 'px' }">
                <span v-fit="s.w" class="lbl">{{ s.title }}</span>
                <svg v-if="i < 3" class="chev" viewBox="0 0 42 80"><path d="M.5-1L38 37.500q2.500 2.500 0 5L.5 81" fill="none" stroke="url(#g-chev)" stroke-width="2.400" /></svg>
              </div>
            </div>
            <div class="ready">
              <svg class="page"><use href="#page" /></svg>
              <span v-fit="569" class="lbl">Your provisioning profile is ready.</span>
            </div>
            <div class="rule soft"></div>
            <div class="install">
              <div class="l1"><span v-fit="281" class="lbl">Download and Install</span></div>
              <div class="l2"><span v-fit="959" class="lbl">Download and double click the following file to install your Provisioning Profile.</span></div>
            </div>
            <div class="panel">
              <svg class="page"><use href="#page" /></svg>
              <div class="info">
                <div v-for="d in details" :key="d[0]" class="drow">
                  <span class="k"><span v-fit="d[1]" class="lbl">{{ d[0] }}</span></span>
                  <span v-fit="d[3]" class="lbl">{{ d[2] }}</span>
                </div>
                <div class="dl"><span v-fit="147" class="lbl">Download</span></div>
              </div>
            </div>
            <div class="rule bottom"></div>
          </section>
        </div>
      </div>
      <div class="track"><div class="thumb"></div></div>
    </main>

    <div class="shelf">
      <div v-for="d in downloads" :key="d.title" class="dlitem">
        <svg class="dlicon" viewBox="0 0 26 34"><use :href="'#' + d.icon" /><text v-for="m in marks[d.icon]" :key="m.y" :x="m.x" :y="m.y" :font-size="m.s" :fill="m.c" :font-family="m.f" :font-weight="m.b" :textLength="m.l" lengthAdjust="spacingAndGlyphs" text-anchor="middle">{{ m.t }}</text></svg>
        <span class="name"><span v-fit="d.w" class="lbl">{{ d.title }}</span></span>
        <svg class="up" viewBox="0 0 18 12"><path d="M1.500 11L9 2l7.500 9" fill="none" stroke="#85888c" stroke-width="2.600" /></svg>
      </div>
      <div class="showall"><span v-fit="98" class="lbl">Show All</span></div>
      <svg class="shx" viewBox="0 0 18 18"><path d="M1 1l16 16M17 1L1 17" stroke="#85888c" stroke-width="2.800" /></svg>
    </div>
    <div class="desk"></div>

    <div class="anydesk">
      <div class="ad-bar"><i></i><i></i><i></i><span v-fit="102" class="lbl">Anydesk</span></div>
      <div class="ad-body">
        <div class="ad-menu">
          <div class="ad1">Disconnect</div>
          <div class="ad2">More</div>
        </div>
      </div>
    </div>

    <div class="dock">
      <div v-for="(d, i) in dock" :key="i" class="app">
        <svg width="74" height="80" viewBox="0 0 74 80"><use :href="'#' + d[0]" width="74" height="84" /><text v-for="m in marks[d[0]]" :key="m.y" :x="m.x" :y="m.y" :font-size="m.s" :fill="m.c" :font-family="m.f" :transform="m.r" text-anchor="middle">{{ m.t }}</text></svg>
        <i v-if="d[1]"></i>
      </div>
      <span class="dsep"></span>
      <svg width="74" height="84" viewBox="0 0 74 84"><use href="#trash" /></svg>
    </div>
  </div>
</template>

<style>
body { margin: 0; overflow: hidden; }
</style>

<style scoped>
* { box-sizing: border-box; }
.screen { position: relative; width: 2560px; height: 1600px; overflow: hidden; background: #fff; font-family: Inter, Roboto, sans-serif; display: flex; flex-direction: column; }
.sprites { position: absolute; }
.lbl { display: inline-block; white-space: pre; flex: none; }
svg { flex: none; display: block; }
.ic32 { width: 32px; height: 32px; }
.vr { width: 2px; height: 32px; background: #b3b6ba; flex: none; }

.menubar { height: 46px; flex: none; border-bottom: 2px solid #2a3d4f; background: linear-gradient(90deg, #e1eef6, #e4edf6 30%, #e3eff7 45%, #e9f0f9 65%, #eef2fa); display: flex; align-items: center; color: #2c3740; font-size: 27px; }
.mb-apple { width: 32px; height: 32px; margin-left: 38px; margin-top: -3px; }
.menus { display: flex; gap: 38px; margin-left: 39px; }
.status { margin-left: auto; width: 806px; display: grid; grid-template-columns: 48px 46px 48px 61px 62px 56px 87px 195px 64px 57px 82px; align-items: center; }
.status svg:nth-child(1) { width: 32px; height: 36px; }
.status svg:nth-child(2), .status svg:nth-child(3) { width: 32px; height: 32px; }
.status svg:nth-child(4), .status svg:nth-child(5) { width: 42px; height: 32px; }
.status svg:nth-child(7) { width: 48px; height: 28px; }
.status svg:nth-child(9) { width: 30px; height: 30px; }
.status svg:nth-child(10) { width: 32px; height: 32px; }
.status svg:nth-child(11) { width: 38px; height: 24px; }
.status .lbl { justify-self: start; }
.pct { font-size: 25px; }

.browser { height: 220px; flex: none; background: #1f2c38; }
.tabstrip { height: 84px; background: #dee1e6; border-radius: 10px 10px 0 0; display: flex; align-items: flex-end; }
.lights { width: 158px; height: 84px; flex: none; display: flex; gap: 16px; padding: 31px 0 0 26px; }
.lights i { width: 24px; height: 24px; border-radius: 50%; border: 1px solid #0002; }
.lights .r { background: #fc5b57; } .lights .y { background: #fdbc2e; } .lights .g { background: #27c840; }
.tab { width: 160px; height: 68px; flex: none; display: flex; align-items: center; padding-left: 15px; position: relative; font-size: 23.5px; color: #5f6368; }
.tab.narrow { width: 158.3px; }
.tab::after { content: ''; position: absolute; right: 0; top: 15px; width: 2px; height: 40px; background: #a2a5aa; }
.tab.last::after, .tab.active::after { display: none; }
.tab .ttl { width: 80px; margin-left: 15px; overflow: hidden; -webkit-mask-image: linear-gradient(90deg, #000 60%, transparent 100%); mask-image: linear-gradient(90deg, #000 60%, transparent 100%); display: flex; line-height: 36px; }
.tab.active { background: #fff; border-radius: 16px 16px 0 0; color: #3c4043; width: 160px; margin-left: -3px; padding-left: 16px; }
.tab.active .ttl { width: 39px; }
.tab.active::before { content: ''; position: absolute; left: -16px; right: -16px; bottom: 0; height: 16px; background: radial-gradient(circle at 0 0, transparent 15.500px, #fff 16px) 0 0 / 16px 16px no-repeat, radial-gradient(circle at 100% 0, transparent 15.500px, #fff 16px) 100% 0 / 16px 16px no-repeat; }
.grey { color: #606265; }
.close { width: 18px; height: 18px; margin-left: 16px; }
.plus { width: 26px; height: 26px; margin: 0 0 21px 29px; }

.toolbar { height: 72px; background: #fff; display: flex; align-items: center; padding-left: 30px; }
.nav { width: 28px; height: 28px; margin-right: 36px; }
.omnibox { margin-left: -6px; width: 1966px; height: 56px; border-radius: 28px; background: #f1f3f4; display: flex; align-items: center; padding-left: 27px; font-size: 27px; flex: none; color: #5f6368; }
.lock { width: 18px; height: 23px; margin-top: -2px; }
.org { margin-left: 27px; }
.omnibox .vr { margin: 0 17px 0 18px; background: #a5a8ac; }
.u1 { color: #202124; } .u2 { color: #7b8085; }
.star { width: 32px; height: 32px; margin: -2px 20px 0 auto; }
.cors { width: 32px; height: 32px; border-radius: 4px; background: linear-gradient(#5fb80c, #3f9a06); margin-left: 32px; }
.ext { width: 32px; height: 32px; margin-left: 33px; }
.pipette { margin-left: 31px; width: 33px; }
.vr.light { background: #cfd1d4; margin-left: 31px; }
.avatar { width: 40px; height: 40px; border-radius: 50%; background: #78909c; color: #fff; font-size: 21px; line-height: 40px; text-align: center; margin-left: 24px; flex: none; }
.dots { width: 8px; height: 28px; margin-left: 40px; }

.bookmarks { height: 64px; background: #fff; border-bottom: 2px solid #b2b4b4; padding: 0 0 8px 31px; display: flex; align-items: center; font-size: 23.500px; color: #5a5d61; }
.bm { display: flex; align-items: center; flex: none; }
.more { margin-left: 241px; width: 16px; font-size: 26px; margin-top: -5px; }
.vr.thin { margin-left: 20px; background: #ccc; width: 1.500px; }
.folder { width: 34px; height: 28px; margin: -2px 15px 0 20px; }

.viewport { height: 1144px; flex: none; background: #f0f0f0; overflow: hidden; display: flex; font-family: "Liberation Sans", Arial, sans-serif; color: #333; }
.site { margin-left: 286px; width: 1960px; height: 1300px; box-shadow: 0 0 5px #0005; background: #fff; flex: none; }
.masthead { height: 58px; border-bottom: 2px solid #a5a5a5; background: linear-gradient(#f6f6f6, #e8e8e8); }
.mast-row { display: flex; align-items: center; height: 40px; position: relative; top: -10px; padding-left: 26px; }
.mast-title { font-weight: 700; font-size: 36px; color: #666; text-shadow: 0 2px 0 #fff; }
.user { font-size: 22px; margin-left: 1098px; }
.caret { width: 0; border: 9px solid transparent; border-top: 10px solid #333; border-bottom: 0; }
.caret.small { border-width: 9px 8px 0; margin: -7px 0 0 15px; }
.cols { display: flex; height: 1250px; }
.side { width: 490px; background: #f9fbfa; border-right: 2px solid #d2d3d3; padding: 32px 0 0 28px; flex: none; }
.select { margin-left: 4px; width: 428px; height: 64px; border: 2px solid #dadada; border-radius: 7px; background: linear-gradient(#fff, #f7f7f7 49%, #efefef 51%, #e4e4e4); display: flex; align-items: center; justify-content: space-between; padding: 1px 21px 0 26px; font-weight: 700; font-size: 28px; text-shadow: 0 2px 0 #fff; }
.fade-rule { margin: 34px 0 0 40px; width: 392px; height: 4px; background: linear-gradient(90deg, transparent, #dcdedd 50%, transparent); }
.sec + .sec { margin-top: 20px; border-top: 2px solid #e3e5e4; padding-top: 2px; margin-left: 4px; width: 424px; }
.sec + .sec > * { margin-left: -4px; }
.sec-head { height: 56px; display: flex; align-items: center; gap: 13px; font-size: 24px; font-weight: 700; }
.sec-item { height: 56px; display: flex; align-items: center; padding-left: 48px; gap: 11px; font-size: 24px; }
.sec-item i { width: 16px; height: 16px; border-radius: 3px; background: #c8c8c8; }

.content { width: 1470px; }
.titlebar { height: 124px; background: #e6e6e6; border-bottom: 2px solid #bebebe; display: grid; grid-template-columns: 1fr auto 1fr; align-items: center; padding: 1px 34px 0; }
.pagetitle { grid-column: 2; font-size: 36px; text-shadow: 0 2px 0 #fff; margin-top: -3px; margin-left: -1px; }
.btns { display: flex; gap: 16px; justify-content: flex-end; padding-top: 1px; }
.tb { width: 60px; height: 44px; border: 2px solid #cfcfcf; border-radius: 6px; background: linear-gradient(#f1f1f1 50%, #eaeaea 51%, #efefef); display: flex; align-items: center; justify-content: center; }
.tb.on { background: #929292; border-color: #666; border-radius: 4px; box-shadow: inset 0 0 8px #555; }
.steps { margin-top: 2px; height: 80px; display: flex; background: linear-gradient(#dcdcdc, #b7b7b7 65%); }
.step { background: #888; color: #fff; height: 80px; display: flex; align-items: center; font-size: 24px; font-weight: 700; position: relative; flex: none; text-shadow: 0 -1px 1px #0005; padding-bottom: 1px; }
.step.end { border-radius: 0 4px 4px 0; }
.chev { position: absolute; z-index: 1; right: -42px; top: 0; width: 42px; height: 80px; }
.ready { height: 227px; padding: 70px 0 0 100px; display: flex; align-items: flex-start; font-size: 36px; font-weight: 700; color: #000; }
.ready .lbl { line-height: 40px; margin: 22px 0 0 73px; }
.page { width: 88px; height: 112px; }
.rule { height: 3px; width: 1310px; margin-left: 80px; background: linear-gradient(90deg, #f4f4f4, #cfcfcf 50%, #f6f6f6); }
.install { padding: 85px 0 0 79px; height: 230px; font-size: 28px; }
.l1 { font-weight: 700; color: #000; height: 44px; line-height: 44px; }
.l2 { height: 44px; line-height: 44px; }
.panel { margin-left: 80px; width: 1310px; height: 320px; background: #f9fbfa; display: flex; padding: 50px 0 0 96px; }
.info { margin: -3px 0 0 87px; font-size: 24px; }
.drow { display: flex; height: 38px; line-height: 38px; }
.drow .k { width: 110px; font-weight: 700; color: #666; display: flex; }
.dl { margin: 29px 0 0 291px; width: 224px; height: 70px; border: 2px solid #0d73c8; border-radius: 7px; background: linear-gradient(#429eec, #0070cf); color: #fff; font-size: 33px; display: flex; align-items: center; justify-content: center; }
.dl .lbl { position: relative; left: -1px; }
.rule.bottom { margin-top: 70px; background: #e5e5e5; height: 2px; }
.track { margin-left: auto; width: 29px; background: #fafafa; border-left: 2px solid #e7e7e7; border-right: 2px solid #efefef; padding: 72px 0 0 5px; }
.thumb { width: 16px; height: 602px; border-radius: 8px; background: #c1c1c1; }

.shelf { height: 98px; flex: none; border-top: 2px solid #d3d3d3; background: linear-gradient(#fff, #fcfcfc 30%, #ebebeb); display: flex; border-radius: 0 0 0 10px; font-size: 27px; color: #5f6368; }
.dlitem { width: 454px; height: 72px; margin-top: 12px; border-right: 2px solid #c9cacb; display: flex; flex: none; }
.dlitem:first-child { width: 461px; padding-left: 7px; }
.dlicon { width: 26px; height: 32px; margin: 17px 0 0 36px; }
.name { width: 307px; margin: 21px 0 0 29px; line-height: 40px; }
.up { width: 19px; height: 12px; margin-top: 29px; }
.showall { margin: 14px 0 0 501px; width: 164px; height: 70px; border: 2px solid #a6a9ad; border-radius: 8px; padding-left: 31px; font-weight: 500; font-size: 26px; line-height: 58px; }
.shx { width: 18px; height: 18px; margin: 37px 0 0 27px; }
.desk { flex: 1; background: repeating-linear-gradient(0deg, #0004 0 2px, transparent 2px 5px, #7b554a33 5px 7px, transparent 7px 11px), linear-gradient(165deg, #33211d, #4a2f27 6%, #3c2620 10%, #452c25); }

.anydesk { position: absolute; left: 2110px; top: 1463px; width: 600px; height: 300px; border-radius: 10px 0 0 0; background: #000; overflow: hidden; box-shadow: 0 0 60px #0009; color: #858585; }
.ad-bar { height: 45px; background: #212121; border-top: 1px solid #444; display: flex; align-items: center; padding-left: 16px; gap: 16px; font-size: 25px; }
.ad-bar i { width: 24px; height: 24px; border-radius: 50%; background: #575757; }
.ad-bar .lbl { margin-left: 55px; }
.ad-body { height: 200px; padding-left: 322px; }
.ad-menu { border-left: 2px solid #2b2b2b; height: 200px; padding-left: 31px; font-size: 23px; margin-top: 2px; }
.ad1 { height: 58px; border-bottom: 2px solid #2b2b2b; padding-left: 20px; line-height: 55px; }
.ad2 { padding-left: 7px; line-height: 48px; }

.dock { position: absolute; left: 222px; top: 1508px; width: 2115px; height: 92px; border-radius: 8px 10px 0 0; padding-left: 6px; display: flex; background: linear-gradient(90deg, #9e766c, #b37b66 18%, #b57a60 28%, #a06f3c 34%, #c47c24 40%, #cf7f20 55%, #dc8519 68%, #e98c12 80%, #cf8535 85%, #7f7479 91%, #626874 94%, #565857 100%); }
.app { width: 74px; flex: none; display: flex; flex-direction: column; align-items: center; }
.app i { width: 8px; height: 8px; border-radius: 50%; background: #3c0500; }
.dsep { width: 2px; height: 68px; margin: 12px 14px 0 16px; background: #3b3f47; flex: none; }
</style>
